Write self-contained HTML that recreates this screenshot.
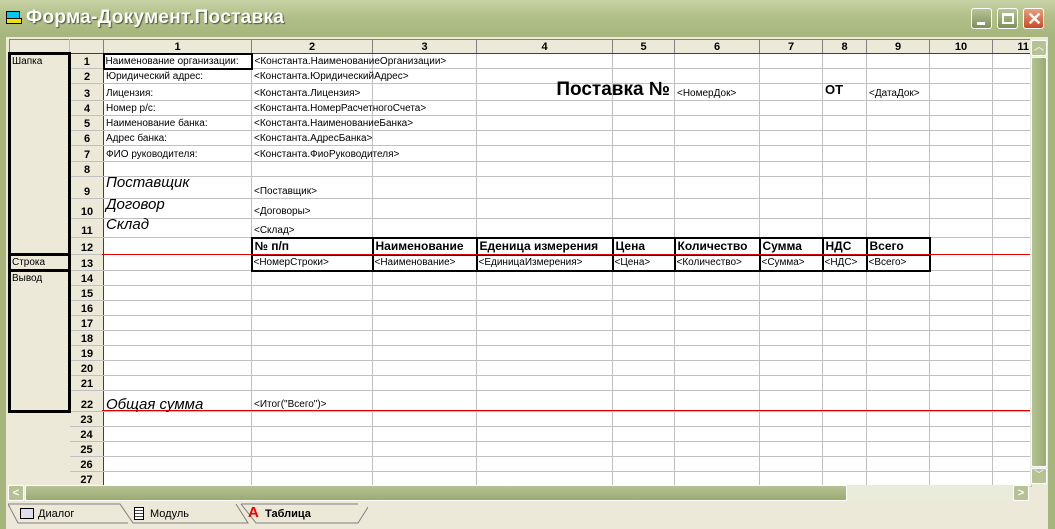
<!DOCTYPE html>
<html><head><meta charset="utf-8"><style>
*{box-sizing:border-box;margin:0;padding:0}
body{width:1055px;height:529px;overflow:hidden;background:#ece9d8;font-family:"Liberation Sans",Arial,sans-serif;position:relative}
.title{position:absolute;left:0;top:0;width:1055px;height:37px;background:linear-gradient(#c9d3a6,#b3c08b 40%,#a6b57c);}
.title .t{position:absolute;left:26px;top:7px;font-size:19px;font-weight:bold;color:#fff;text-shadow:1px 1px 1px #4a5530;letter-spacing:0.3px}
.frameL{position:absolute;left:0;top:37px;width:6px;height:492px;background:#a6b57c}
.frameR{position:absolute;left:1048px;top:37px;width:7px;height:492px;background:#a6b57c}
.btn{position:absolute;top:8px;width:21px;height:21px;border:1px solid #fff;border-radius:3px;background:linear-gradient(#b8c49a,#7e8f58)}
.grid{position:absolute;left:8px;top:39px;width:1022px;border-collapse:collapse;table-layout:fixed;font-size:10px}
.grid td{border:1px solid #c0c0c0;background:#fff;white-space:nowrap;overflow:visible;padding:0 2px;vertical-align:bottom;line-height:12px}
.grid td.h{background:#ece9d8;border:1px solid #808080;border-bottom:1px solid #404040;font-weight:bold;text-align:center;font-size:11px}
.grid td.rn{background:#ece9d8;border:1px solid #c0c0c0;border-right:1px solid #404040;font-weight:bold;text-align:center;font-size:11px}
.grid td.sec{background:#ece9d8;border:3px solid #000;vertical-align:top;padding:1px 0 0 1px;font-size:10px}
.grid td.hd{border:2px solid #000;font-weight:bold;font-size:12px;vertical-align:middle;padding:0 2px}
.grid td.dt{border:2px solid #000;font-size:10px;vertical-align:middle;padding:0 1px}
.it{font-style:italic;font-size:15px;line-height:16px}
.red{position:absolute;left:102px;width:928px;height:1px;background:#e00000}
.vs{position:absolute;left:1030px;top:39px;width:18px;height:446px;background:#e8ecd8}
.hs{position:absolute;left:8px;top:485px;width:1022px;height:16px;background:#e8ecd8}
.tabs{position:absolute;left:8px;top:503px;height:22px;width:1040px;font-size:11px}
</style></head><body>
<div class="title"><div style="position:absolute;left:6px;top:11px;width:14px;height:12px;background:#00c8f0;border:1px solid #000"></div><div style="position:absolute;left:6px;top:18px;width:16px;height:6px;background:#f0e000;border:1px solid #000"></div><div class="t">Форма-Документ.Поставка</div>
<div class="btn" style="left:971px"><div style="position:absolute;left:5px;top:13px;width:8px;height:3px;background:#fff"></div></div>
<div class="btn" style="left:997px"><div style="position:absolute;left:4px;top:4px;width:12px;height:11px;border:2px solid #fff;border-top-width:3px"></div></div>
<div class="btn" style="left:1023px;background:linear-gradient(#e8a080,#c84a28)"><div style="position:absolute;left:1px;top:0;width:19px;color:#fff;font-size:18px;font-weight:bold;text-align:center;line-height:20px">✕</div></div>
</div>
<div class="frameL"></div><div class="frameR"></div>
<table class="grid">
<colgroup><col style="width:60px"><col style="width:34px"><col style="width:148px"><col style="width:121px"><col style="width:104px"><col style="width:136px"><col style="width:62px"><col style="width:85px"><col style="width:63px"><col style="width:44px"><col style="width:63px"><col style="width:63px"><col style="width:39px"></colgroup>
<tr style="height:14px"><td class="h" style="border-right-color:#c0c0c0"></td><td class="h"></td><td class="h">1</td><td class="h">2</td><td class="h">3</td><td class="h">4</td><td class="h">5</td><td class="h">6</td><td class="h">7</td><td class="h">8</td><td class="h">9</td><td class="h">10</td><td class="h" style="text-align:right">11</td></tr>
<tr style="height:15px"><td class="sec" rowspan="12">Шапка</td><td class="rn">1</td><td style="border:2px solid #000;padding-left:1px">Наименование организации:</td><td>&lt;Константа.НаименованиеОрганизации&gt;</td><td></td><td></td><td></td><td></td><td></td><td></td><td></td><td></td><td></td></tr>
<tr style="height:15px"><td class="rn">2</td><td>Юридический адрес:</td><td>&lt;Константа.ЮридическийАдрес&gt;</td><td></td><td></td><td></td><td></td><td></td><td></td><td></td><td></td><td></td></tr>
<tr style="height:17px"><td class="rn">3</td><td>Лицензия:</td><td>&lt;Константа.Лицензия&gt;</td><td></td><td style="position:relative"><span style="position:absolute;right:-58px;bottom:0;font-size:19px;font-weight:bold;line-height:20px">Поставка №</span></td><td></td><td style="font-size:10px">&lt;НомерДок&gt;</td><td></td><td style="font-weight:bold;font-size:13px;vertical-align:top">ОТ</td><td style="font-size:10px">&lt;ДатаДок&gt;</td><td></td><td></td></tr>
<tr style="height:15px"><td class="rn">4</td><td>Номер р/с:</td><td>&lt;Константа.НомерРасчетногоСчета&gt;</td><td></td><td></td><td></td><td></td><td></td><td></td><td></td><td></td><td></td></tr>
<tr style="height:15px"><td class="rn">5</td><td>Наименование банка:</td><td>&lt;Константа.НаименованиеБанка&gt;</td><td></td><td></td><td></td><td></td><td></td><td></td><td></td><td></td><td></td></tr>
<tr style="height:15px"><td class="rn">6</td><td>Адрес банка:</td><td>&lt;Константа.АдресБанка&gt;</td><td></td><td></td><td></td><td></td><td></td><td></td><td></td><td></td><td></td></tr>
<tr style="height:16px"><td class="rn">7</td><td>ФИО руководителя:</td><td>&lt;Константа.ФиоРуководителя&gt;</td><td></td><td></td><td></td><td></td><td></td><td></td><td></td><td></td><td></td></tr>
<tr style="height:15px"><td class="rn">8</td><td></td><td></td><td></td><td></td><td></td><td></td><td></td><td></td><td></td><td></td><td></td></tr>
<tr style="height:22px"><td class="rn">9</td><td class="it" style="vertical-align:top">Поставщик</td><td style="font-size:10px">&lt;Поставщик&gt;</td><td></td><td></td><td></td><td></td><td></td><td></td><td></td><td></td><td></td></tr>
<tr style="height:20px"><td class="rn">10</td><td class="it" style="vertical-align:top">Договор</td><td style="font-size:10px">&lt;Договоры&gt;</td><td></td><td></td><td></td><td></td><td></td><td></td><td></td><td></td><td></td></tr>
<tr style="height:19px"><td class="rn">11</td><td class="it" style="vertical-align:top">Склад</td><td style="font-size:10px">&lt;Склад&gt;</td><td></td><td></td><td></td><td></td><td></td><td></td><td></td><td></td><td></td></tr>
<tr style="height:17px"><td class="rn">12</td><td></td><td class="hd">№ п/п</td><td class="hd">Наименование</td><td class="hd">Еденица измерения</td><td class="hd">Цена</td><td class="hd">Количество</td><td class="hd">Сумма</td><td class="hd">НДС</td><td class="hd">Всего</td><td></td><td></td></tr>
<tr style="height:15px"><td class="sec">Строка</td><td class="rn">13</td><td></td><td class="dt">&lt;НомерСтроки&gt;</td><td class="dt">&lt;Наименование&gt;</td><td class="dt">&lt;ЕдиницаИзмерения&gt;</td><td class="dt">&lt;Цена&gt;</td><td class="dt">&lt;Количество&gt;</td><td class="dt">&lt;Сумма&gt;</td><td class="dt">&lt;НДС&gt;</td><td class="dt">&lt;Всего&gt;</td><td></td><td></td></tr>
<tr style="height:15px"><td class="sec" rowspan="9">Вывод</td><td class="rn">14</td><td></td><td></td><td></td><td></td><td></td><td></td><td></td><td></td><td></td><td></td><td></td></tr>
<tr style="height:15px"><td class="rn">15</td><td></td><td></td><td></td><td></td><td></td><td></td><td></td><td></td><td></td><td></td><td></td></tr>
<tr style="height:15px"><td class="rn">16</td><td></td><td></td><td></td><td></td><td></td><td></td><td></td><td></td><td></td><td></td><td></td></tr>
<tr style="height:15px"><td class="rn">17</td><td></td><td></td><td></td><td></td><td></td><td></td><td></td><td></td><td></td><td></td><td></td></tr>
<tr style="height:15px"><td class="rn">18</td><td></td><td></td><td></td><td></td><td></td><td></td><td></td><td></td><td></td><td></td><td></td></tr>
<tr style="height:15px"><td class="rn">19</td><td></td><td></td><td></td><td></td><td></td><td></td><td></td><td></td><td></td><td></td><td></td></tr>
<tr style="height:15px"><td class="rn">20</td><td></td><td></td><td></td><td></td><td></td><td></td><td></td><td></td><td></td><td></td><td></td></tr>
<tr style="height:15px"><td class="rn">21</td><td></td><td></td><td></td><td></td><td></td><td></td><td></td><td></td><td></td><td></td><td></td></tr>
<tr style="height:21px"><td class="rn">22</td><td class="it">Общая сумма</td><td style="font-size:10px">&lt;Итог("Всего")&gt;</td><td></td><td></td><td></td><td></td><td></td><td></td><td></td><td></td><td></td></tr>
<tr style="height:15px"><td style="background:#ece9d8;border-color:#ece9d8"></td><td class="rn">23</td><td></td><td></td><td></td><td></td><td></td><td></td><td></td><td></td><td></td><td></td><td></td></tr>
<tr style="height:15px"><td style="background:#ece9d8;border-color:#ece9d8"></td><td class="rn">24</td><td></td><td></td><td></td><td></td><td></td><td></td><td></td><td></td><td></td><td></td><td></td></tr>
<tr style="height:15px"><td style="background:#ece9d8;border-color:#ece9d8"></td><td class="rn">25</td><td></td><td></td><td></td><td></td><td></td><td></td><td></td><td></td><td></td><td></td><td></td></tr>
<tr style="height:15px"><td style="background:#ece9d8;border-color:#ece9d8"></td><td class="rn">26</td><td></td><td></td><td></td><td></td><td></td><td></td><td></td><td></td><td></td><td></td><td></td></tr>
<tr style="height:15px"><td style="background:#ece9d8;border-color:#ece9d8"></td><td class="rn">27</td><td></td><td></td><td></td><td></td><td></td><td></td><td></td><td></td><td></td><td></td><td></td></tr>
</table>
<div class="red" style="top:254px"></div>
<div class="red" style="top:410px"></div>
<div class="vs">
<div style="position:absolute;left:1px;top:1px;width:16px;height:16px;border:1px solid #fff;border-radius:2px;background:#b6c295;color:#fff;font-size:10px;text-align:center;line-height:14px">︿</div>
<div style="position:absolute;left:1px;top:18px;width:16px;height:410px;border:1px solid #fff;border-radius:2px;background:linear-gradient(90deg,#b6c295,#9aab72)"></div>
<div style="position:absolute;left:1px;top:429px;width:16px;height:16px;border:1px solid #fff;border-radius:2px;background:#b6c295;color:#fff;font-size:10px;text-align:center;line-height:14px">﹀</div>
</div>
<div class="hs">
<div style="position:absolute;left:0;top:0;width:16px;height:16px;border:1px solid #fff;border-radius:2px;background:#b6c295;color:#fff;font-size:11px;font-weight:bold;text-align:center;line-height:14px">&lt;</div>
<div style="position:absolute;left:17px;top:0;width:822px;height:16px;border:1px solid #fff;border-radius:2px;background:linear-gradient(#b6c295,#9aab72)"></div>
<div style="position:absolute;left:1005px;top:0;width:16px;height:16px;border:1px solid #fff;border-radius:2px;background:#b6c295;color:#fff;font-size:11px;font-weight:bold;text-align:center;line-height:14px">&gt;</div>
</div>
<div class="tabs">
<svg width="360" height="22" style="position:absolute;left:0;top:0"><path d="M0,1 L112,1 L125,20 L240,20 L228,1 M0,1 L10,20 L120,20 M233,1 L248,20 L350,20 L362,1 L350,20" fill="none" stroke="#808080"/><path d="M233,1 L350,1" stroke="#808080"/></svg>
<div style="position:absolute;left:12px;top:5px;width:14px;height:11px;border:1px solid #000;background:#dde"></div>
<div style="position:absolute;left:30px;top:5px">Диалог</div>
<div style="position:absolute;left:126px;top:4px;width:10px;height:13px;border:1px solid #000;background:repeating-linear-gradient(#fff 0 2px,#444 2px 3px)"></div>
<div style="position:absolute;left:142px;top:5px">Модуль</div>
<div style="position:absolute;left:240px;top:1px;color:#e00;font-weight:bold;font-size:15px">A</div>
<div style="position:absolute;left:257px;top:5px;font-weight:bold">Таблица</div>
</div>
</body></html>
